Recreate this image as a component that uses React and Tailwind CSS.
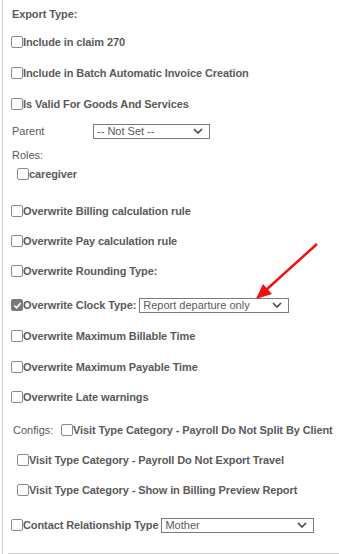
import React from 'react'

function Box({ checked }) {
  return (
    <span
      className={`inline-flex w-[12px] h-[12px] shrink-0 items-center justify-center rounded-[2px] border ${
        checked ? 'bg-[#7a7a7a] border-[#7a7a7a]' : 'bg-white border-[#8a8a8a]'
      }`}
    >
      {checked && (
        <svg width="9" height="9" viewBox="0 0 10 10">
          <path d="M1.5 5.2 L4 7.6 L8.6 2.2" fill="none" stroke="white" strokeWidth="1.8" />
        </svg>
      )}
    </span>
  )
}

function Check({ label, checked, className = '' }) {
  return (
    <div className={`flex h-4 items-center ${className}`}>
      <Box checked={checked} />
      <span className="font-bold tracking-[-0.1px]">{label}</span>
    </div>
  )
}

function Select({ value, className = '' }) {
  return (
    <div className={`flex h-[15px] items-center justify-between border border-[#7a7a7a] bg-white pl-[3px] pr-[6px] font-normal ${className}`}>
      <span>{value}</span>
      <svg width="10" height="6" viewBox="0 0 10 6">
        <path d="M1 1 L5 5 L9 1" fill="none" stroke="#444" strokeWidth="1.6" />
      </svg>
    </div>
  )
}

export default function App() {
  return (
    <div
      className="relative h-[554px] w-[339px] overflow-hidden bg-white text-[11px] text-[#5a5a5a]"
      style={{ fontFamily: '"Liberation Sans", Arial, sans-serif' }}
    >
      <div className="ml-[2px] flex h-full flex-col border-l border-[#d0d0d0] pl-[8px]">
        <div className="mt-[6px] flex h-4 items-center pl-[1px] font-bold tracking-[-0.1px]">Export Type:</div>
        <Check className="mt-[12px]" label="Include in claim 270" />
        <Check className="mt-[15px]" label="Include in Batch Automatic Invoice Creation" />
        <Check className="mt-[15px]" label="Is Valid For Goods And Services" />
        <div className="mt-[11px] flex h-4 items-center pl-[1px]">
          <span className="w-[81px]">Parent</span>
          <Select value="-- Not Set --" className="w-[117px]" />
        </div>
        <div className="mt-[8px] flex h-4 items-center pl-[1px]">Roles:</div>
        <Check className="mt-[3px] pl-[6px]" label="caregiver" />
        <Check className="mt-[21px]" label="Overwrite Billing calculation rule" />
        <Check className="mt-[14px]" label="Overwrite Pay calculation rule" />
        <Check className="mt-[14px]" label="Overwrite Rounding Type:" />
        <div className="mt-[18px] flex h-4 items-center">
          <Box checked />
          <span className="font-bold tracking-[-0.1px]">Overwrite Clock Type:</span>
          <Select value="Report departure only" className="ml-[3px] w-[150px]" />
        </div>
        <Check className="mt-[15px]" label="Overwrite Maximum Billable Time" />
        <Check className="mt-[15px]" label="Overwrite Maximum Payable Time" />
        <Check className="mt-[14px]" label="Overwrite Late warnings" />
        <div className="mt-[17px] flex h-4 items-center pl-[2px]">
          <span className="w-[48px]">Configs:</span>
          <Box />
          <span className="font-bold tracking-[-0.1px]">Visit Type Category - Payroll Do Not Split By Client</span>
        </div>
        <Check className="mt-[14px] pl-[6px]" label="Visit Type Category - Payroll Do Not Export Travel" />
        <Check className="mt-[14px] pl-[6px]" label="Visit Type Category - Show in Billing Preview Report" />
        <div className="mt-[19px] flex h-4 items-center">
          <Box />
          <span className="font-bold tracking-[-0.1px]">Contact Relationship Type</span>
          <Select value="Mother" className="ml-[3px] w-[153px]" />
        </div>
      </div>
      <div className="absolute bottom-0 left-[8px] right-0 h-px bg-[#d0d0d0]" />
      <svg className="absolute left-0 top-0" width="339" height="554">
        <line x1="317" y1="244" x2="266" y2="290" stroke="#f01010" strokeWidth="2.5" />
        <polygon points="256,299 263,284 272,294" fill="#f01010" />
      </svg>
    </div>
  )
}
